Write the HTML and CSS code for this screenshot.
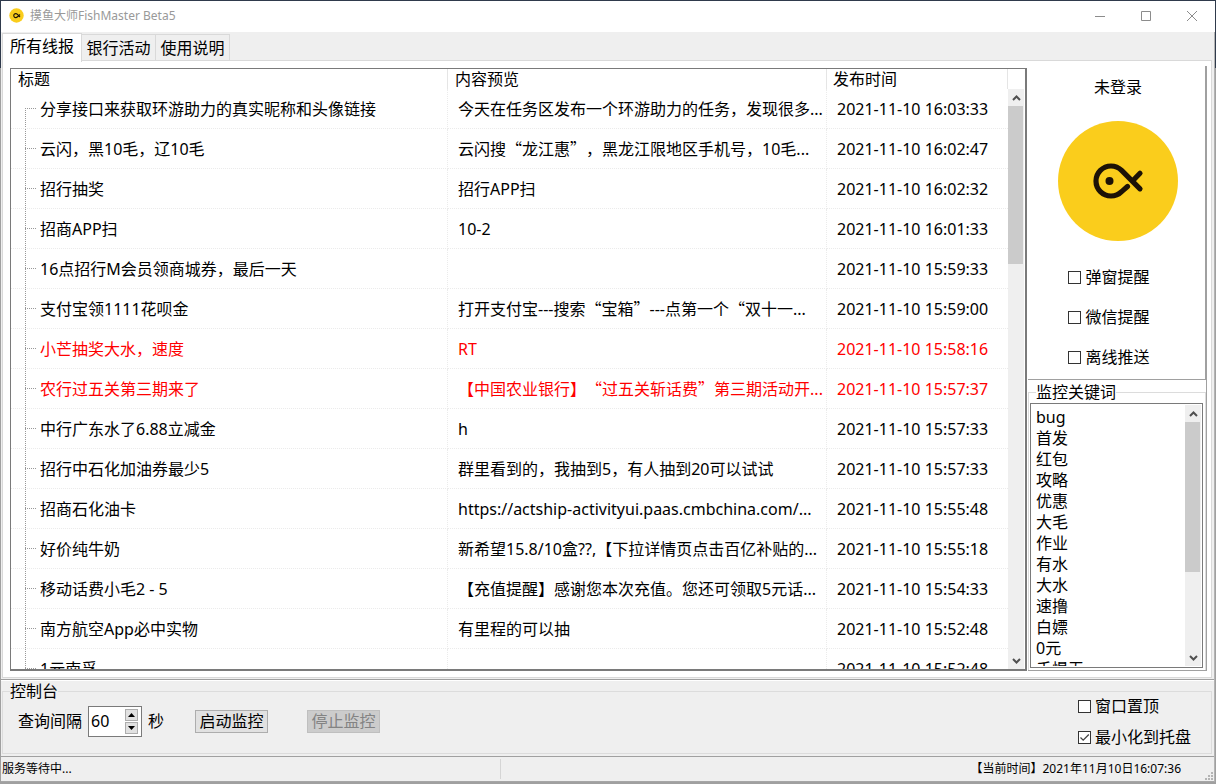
FILE: index.html
```
<!DOCTYPE html>
<html lang="zh-CN">
<head>
<meta charset="utf-8">
<title>摸鱼大师FishMaster Beta5</title>
<link rel="stylesheet" href="styles.css">
</head>
<body>
<svg width="0" height="0" class="defs" aria-hidden="true">
  <symbol id="up" viewBox="0 0 9 6"><path d="M1 5 4.500 1.500 8 5" fill="none" stroke="#505050" stroke-width="2"/></symbol>
  <symbol id="down" viewBox="0 0 9 6"><path d="M1 1 4.500 4.500 8 1" fill="none" stroke="#505050" stroke-width="2"/></symbol>
</svg>
<div class="window">
  <header class="titlebar">
    <svg class="app-icon" viewBox="0 0 15 15"><circle cx="7.500" cy="7.500" r="7.200" fill="#facd1c"/><path d="M11 9 8.200 6.200A2 2 0 1 0 8.200 9L9.500 8M11 6.500 9.500 8" fill="none" stroke="#1c1206" stroke-width="1.100"/></svg>
    <h1 class="app-name">摸鱼大师FishMaster Beta5</h1>
    <div class="win-buttons">
      <button aria-label="最小化"><svg viewBox="0 0 12 12"><path d="M1 6.500H11" stroke="#8c8c8c"/></svg></button>
      <button aria-label="最大化"><svg viewBox="0 0 12 12"><path d="M1.500 1.500H10.500V10.500H1.500Z" fill="none" stroke="#8c8c8c"/></svg></button>
      <button aria-label="关闭"><svg viewBox="0 0 12 12"><path d="M1 1 11 11M11 1 1 11" stroke="#8c8c8c"/></svg></button>
    </div>
  </header>

  <nav class="tabs">
    <button class="tab active">所有线报</button>
    <button class="tab">银行活动</button>
    <button class="tab">使用说明</button>
  </nav>

  <main class="page">
    <section class="tree">
      <table class="feed">
        <colgroup><col><col class="col-preview"><col class="col-time"></colgroup>
        <thead><tr><th>标题</th><th>内容预览</th><th>发布时间</th></tr></thead>
        <tbody>
          <tr class="first"><td>分享接口来获取环游助力的真实昵称和头像链接</td><td>今天在任务区发布一个环游助力的任务，发现很多...</td><td>2021-11-10 16:03:33</td></tr>
          <tr><td>云闪，黑10毛，辽10毛</td><td>云闪搜<span class="wide">“</span>龙江惠<span class="wide">”</span>，黑龙江限地区手机号，10毛...</td><td>2021-11-10 16:02:47</td></tr>
          <tr><td>招行抽奖</td><td>招行APP扫</td><td>2021-11-10 16:02:32</td></tr>
          <tr><td>招商APP扫</td><td>10-2</td><td>2021-11-10 16:01:33</td></tr>
          <tr><td>16点招行M会员领商城券，最后一天</td><td></td><td>2021-11-10 15:59:33</td></tr>
          <tr><td>支付宝领1111花呗金</td><td>打开支付宝---搜索<span class="wide">“</span>宝箱<span class="wide">”</span>---点第一个<span class="wide">“</span>双十一...</td><td>2021-11-10 15:59:00</td></tr>
          <tr class="hot"><td>小芒抽奖大水，速度</td><td>RT</td><td>2021-11-10 15:58:16</td></tr>
          <tr class="hot"><td>农行过五关第三期来了</td><td>【中国农业银行】<span class="wide">“</span>过五关斩话费<span class="wide">”</span>第三期活动开...</td><td>2021-11-10 15:57:37</td></tr>
          <tr><td>中行广东水了6.88立减金</td><td>h</td><td>2021-11-10 15:57:33</td></tr>
          <tr><td>招行中石化加油券最少5</td><td>群里看到的，我抽到5，有人抽到20可以试试</td><td>2021-11-10 15:57:33</td></tr>
          <tr><td>招商石化油卡</td><td>https://actship-activityui.paas.cmbchina.com/...</td><td>2021-11-10 15:55:48</td></tr>
          <tr><td>好价纯牛奶</td><td>新希望15.8/10盒??,【下拉详情页点击百亿补贴的...</td><td>2021-11-10 15:55:18</td></tr>
          <tr><td>移动话费小毛2 - 5</td><td>【充值提醒】感谢您本次充值。您还可领取5元话...</td><td>2021-11-10 15:54:33</td></tr>
          <tr><td>南方航空App必中实物</td><td>有里程的可以抽</td><td>2021-11-10 15:52:48</td></tr>
          <tr><td>1元南孚</td><td></td><td>2021-11-10 15:52:48</td></tr>
        </tbody>
      </table>
      <div class="feed-side">
        <div class="scrollbar">
          <button class="arrow" aria-label="向上"><svg><use href="#up"/></svg></button>
          <div class="track"><div class="thumb feed-thumb"></div></div>
          <button class="arrow" aria-label="向下"><svg><use href="#down"/></svg></button>
        </div>
      </div>
    </section>

    <aside class="side">
      <section class="account">
        <p class="login">未登录</p>
        <svg class="avatar" viewBox="0 0 120 120"><circle cx="60" cy="60" r="60" fill="#facd1c"/><path d="M82 67.800 63.600 49.400A15 15 0 1 0 63.600 70.600L69.500 65.500M82 52.300 74.500 60" fill="none" stroke="#1c1206" stroke-width="5.200" stroke-linecap="round" stroke-linejoin="round"/><circle cx="51.500" cy="60" r="4" fill="#1c1206"/></svg>
        <div class="options">
          <label class="check"><input type="checkbox">弹窗提醒</label>
          <label class="check"><input type="checkbox">微信提醒</label>
          <label class="check"><input type="checkbox">离线推送</label>
        </div>
      </section>
      <fieldset class="keywords">
        <legend>监控关键词</legend>
        <div class="listbox">
          <ul>
            <li>bug</li><li>首发</li><li>红包</li><li>攻略</li><li>优惠</li><li>大毛</li><li>作业</li><li>有水</li><li>大水</li><li>速撸</li><li>白嫖</li><li>0元</li><li>手慢无</li>
          </ul>
          <div class="scrollbar">
            <button class="arrow" aria-label="向上"><svg><use href="#up"/></svg></button>
            <div class="track"><div class="thumb list-thumb"></div></div>
            <button class="arrow" aria-label="向下"><svg><use href="#down"/></svg></button>
          </div>
        </div>
      </fieldset>
    </aside>
  </main>

  <section class="console">
    <fieldset class="console-box">
      <legend>控制台</legend>
      <div class="controls">
        <label for="interval">查询间隔</label>
        <div class="spin">
          <input id="interval" type="text" inputmode="numeric" value="60">
          <div class="spin-buttons">
            <button aria-label="增加"><svg viewBox="0 0 7 4"><path d="M0 4 3.500 0 7 4Z"/></svg></button>
            <button aria-label="减少"><svg viewBox="0 0 7 4"><path d="M0 0 3.500 4 7 0Z"/></svg></button>
          </div>
        </div>
        <span class="unit">秒</span>
        <button class="action start">启动监控</button>
        <button class="action" disabled>停止监控</button>
      </div>
      <div class="window-options">
        <label class="check"><input type="checkbox">窗口置顶</label>
        <label class="check"><input type="checkbox" checked>最小化到托盘</label>
      </div>
    </fieldset>
  </section>

  <footer class="status">
    <span class="state">服务等待中...</span>
    <span class="clock">【当前时间】2021年11月10日16:07:36</span>
    <svg class="grip" viewBox="0 0 9 9"><path d="M6 0h2v2h-2zM3 3h2v2h-2zM6 3h2v2h-2zM0 6h2v2h-2zM3 6h2v2h-2zM6 6h2v2h-2z" fill="#b4b4b4"/></svg>
  </footer>
</div>
</body>
</html>
```
FILE: styles.css
```
* { box-sizing: border-box; }
body {
  margin: 0;
  height: 100vh;
  padding: 1px 1px 2px;
  background: linear-gradient(#2f3a4c 0 68px, #a0a0a0 68px);
  font: 16px/20px "Noto Sans", "Noto Sans CJK SC", sans-serif;
  text-spacing-trim: space-all;
  color: #000;
}
.defs { position: absolute; }
button, input { font: inherit; color: inherit; margin: 0; padding: 0; }
button { border: 0; background: none; }
h1, p, ul { margin: 0; padding: 0; font-weight: normal; }
fieldset { margin: 0; min-width: 0; }

.window {
  height: 100%;
  display: flex;
  flex-direction: column;
  background: #efefef;
  border-right: 1px solid #b4b4b4;
  border-bottom: 1px solid #a6a6a6;
}

.titlebar {
  flex: none;
  height: 31px;
  display: flex;
  align-items: center;
  gap: 6px;
  padding-left: 8px;
  padding-bottom: 2px;
  margin-right: -1px;
  background: #fff;
}
.app-icon { width: 15px; height: 15px; }
.app-name { flex: 1; font-size: 12px; color: #999; }
.win-buttons { display: flex; }
.win-buttons button { width: 46px; height: 29px; display: grid; place-items: center; }
.win-buttons svg { width: 12px; height: 12px; }

.tabs {
  flex: none;
  display: flex;
  align-items: flex-end;
  height: 29px;
  padding-left: 1px;
}
.tab {
  height: 27px;
  width: 74px;
  border: 1px solid #d9d9d9;
  border-left: 0;
  white-space: nowrap;
}
.tab.active {
  position: relative;
  width: 80px;
  height: 29px;
  margin-bottom: -1px;
  padding-bottom: 5px;
  border: 1px solid #d9d9d9;
  border-bottom: 0;
  background: #fff;
}

.page {
  flex: 1;
  min-height: 0;
  display: flex;
  margin: -1px 2px 0 1px;
  padding: 7px 4px 6px 7px;
  background: #fff;
  border: 1px solid #d9d9d9;
}

.tree {
  flex: 1;
  min-width: 0;
  display: flex;
  overflow: hidden;
  border: 1px solid #7a7a7a;
  border-width: 1px 2px 2px 1px;
}
.feed {
  flex: 1;
  min-width: 0;
  height: 0;
  table-layout: fixed;
  border-collapse: separate;
  border-spacing: 0;
}
.col-preview { width: 379px; }
.col-time { width: 181px; }
.feed th {
  height: 20px;
  padding: 1px 7px 0;
  line-height: 19px;
  font-weight: normal;
  text-align: left;
  border-right: 1px solid #e5e5e5;
}
.feed th:last-child { padding-left: 6px; }
.feed td {
  height: 40px;
  padding: 0 2px 0 10px;
  white-space: nowrap;
  overflow: hidden;
  border-bottom: 1px dotted #ebebeb;
  border-right: 1px dotted #ebebeb;
}
.feed td:last-child { border-right: 0; }
.feed td:first-child {
  padding-left: 29px;
  background:
    repeating-linear-gradient(#999 0 1px, transparent 1px 2px) 14px 0 / 1px 100% no-repeat,
    repeating-linear-gradient(90deg, #999 0 1px, transparent 1px 2px) 14px 19px / 11px 1px no-repeat;
}
.feed .first td:first-child { background-position: 14px 19px, 14px 19px; }
.hot { color: #f00; }
.wide { font-family: "Noto Sans CJK SC", sans-serif; line-height: 1; }

.feed-side { flex: none; width: 17px; display: flex; padding-top: 20px; }
.scrollbar { flex: none; width: 16px; display: flex; flex-direction: column; background: #efefef; }
.arrow { height: 17px; display: grid; place-items: center; }
.arrow svg { width: 9px; height: 6px; }
.track { flex: 1; }
.thumb { background: #cbcbcb; width: 15px; }
.feed-thumb { height: 29%; }
.list-thumb { height: 66%; }

.side { width: 179px; display: flex; flex-direction: column; margin: -2px 0 0 1px; border-right: 1px solid #a0a0a0; border-bottom: 1px solid #a0a0a0; }
.account {
  display: flex;
  flex-direction: column;
  align-items: center;
  flex: none;
  height: 314px;
  padding: 11px 0 0 3px;
  border-right: 1px solid #a0a0a0;
  border-bottom: 1px solid #a0a0a0;
}
.avatar { width: 120px; height: 120px; margin: 24px 0 26px; }
.options { display: flex; flex-direction: column; gap: 20px; padding-right: 18px; }
.check { display: flex; align-items: center; gap: 4px; }
.check input {
  appearance: none;
  width: 13px;
  height: 13px;
  border: 1px solid #333;
  background: #fff;
}
.check input:checked {
  background: #fff url("data:image/svg+xml,%3Csvg xmlns='http://www.w3.org/2000/svg' viewBox='0 0 11 11'%3E%3Cpath d='M1.500 5.500 4.200 8.200 9.800 2.500' fill='none' stroke='%23444' stroke-width='1.300'/%3E%3C/svg%3E");
}

.keywords {
  flex: 1;
  min-height: 0;
  display: flex;
  margin-top: 2px;
  padding: 1px 2px 2px 1px;
  border: 1px solid #dcdcdc;
  border-bottom: 0;
}
.keywords legend { padding: 0; margin-left: 6px; line-height: 20px; }
.console-box legend { padding: 0; margin-left: -8px; line-height: 20px; }
.listbox {
  flex: 1;
  height: 100%;
  display: flex;
  overflow: hidden;
  padding: 1px;
  border: 1px solid #7a7a7a;
}
.listbox ul { flex: 1; height: 100%; overflow: hidden; list-style: none; padding: 2px 4px; line-height: 21px; }

.console {
  flex: none;
  margin-top: 1px;
  padding: 1px 2px 2px 1px;
  border-top: 1px solid #a0a0a0;
  border-bottom: 1px solid #a0a0a0;
  box-shadow: inset 0 1px #fff;
}
.console-box {
  display: flex;
  justify-content: space-between;
  height: 73px;
  padding: 0 19px 0 15px;
  border: 1px solid #dcdcdc;
}
.controls { display: flex; align-items: center; height: 40px; }
.spin {
  display: flex;
  align-items: center;
  width: 54px;
  height: 31px;
  margin: 0 6px;
  padding: 2px 3px 2px 2px;
  background: #fff;
  border: 1px solid #7a7a7a;
}
.spin input { width: 34px; height: 25px; border: 0; background: none; }
.spin-buttons { display: flex; flex-direction: column; gap: 1px; }
.spin-buttons button { display: grid; place-items: center; width: 13px; height: 12px; border: 1px solid #adadad; background: #e1e1e1; }
.spin-buttons svg { width: 7px; height: 4px; }
.unit { margin-right: 31px; }
.action { width: 73px; height: 23px; margin-right: 39px; border: 1px solid #adadad; background: #e1e1e1; white-space: nowrap; line-height: 20px; }
.action:disabled { color: #838383; background: #ccc; border-color: #bfbfbf; }
.window-options { display: flex; flex-direction: column; width: 114px; margin-top: -5px; gap: 11px; white-space: nowrap; }

.status {
  flex: none;
  display: flex;
  align-items: center;
  height: 24px;
  font-size: 12px;
}
.state { width: 500px; padding-left: 1px; border-right: 1px solid #d5d5d5; }
.clock { margin-left: auto; padding-right: 24px; }
.grip { align-self: flex-end; width: 9px; height: 9px; }
```
